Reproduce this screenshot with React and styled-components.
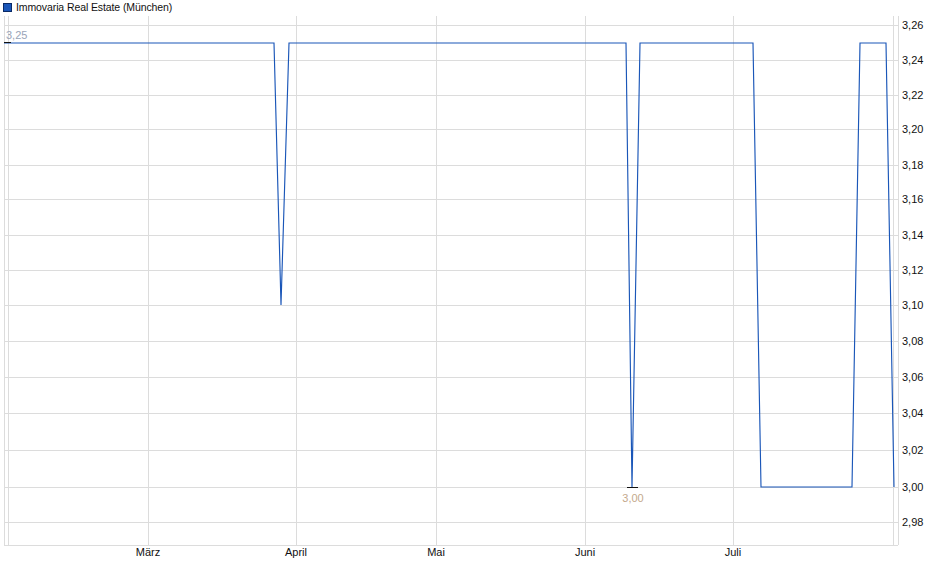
import React from "react";
import styled, { createGlobalStyle } from "styled-components";

const Global = createGlobalStyle`
  html, body { margin: 0; background: #fff; }
  body { font-family: "Liberation Sans", Arial, sans-serif; }
`;

const Page = styled.div`
  width: 940px;
  height: 579px;
  display: flex;
  flex-direction: column;
`;

const Legend = styled.div`
  display: flex;
  align-items: center;
  gap: 4px;
  padding: 0 0 0 3px;
  height: 14px;
  font-size: 10.5px;
  letter-spacing: -0.1px;
  color: #111;
`;

const Swatch = styled.span`
  width: 7px;
  height: 7px;
  background: #1a56b8;
  border: 1px solid #0a2a66;
`;

const ChartSvg = styled.svg`
  display: block;
  font-family: "Liberation Sans", Arial, sans-serif;
`;

const yTicks = [
  ["3,26", 25], ["3,24", 60], ["3,22", 95], ["3,20", 129], ["3,18", 165],
  ["3,16", 199], ["3,14", 235], ["3,12", 270], ["3,10", 305], ["3,08", 341],
  ["3,06", 377], ["3,04", 413], ["3,02", 450], ["3,00", 487], ["2,98", 522],
];
const xTicks = [["März", 148], ["April", 296], ["Mai", 436], ["Juni", 585], ["Juli", 733]];
const OFF = 14;

const pts = [
  [4, 43], [274, 43], [281, 305], [289, 43], [626, 43], [632, 487], [640, 43],
  [753, 43], [761, 487], [852, 487], [860, 43], [886, 43], [894, 487],
];

function Chart() {
  const d = pts.map(([x, y], i) => `${i ? "L" : "M"}${x} ${y - OFF}`).join(" ");
  return (
    <ChartSvg width="940" height="565" viewBox="0 0 940 565">
      {yTicks.map(([t, y]) => (
        <g key={t}>
          <line x1="4" x2="898" y1={y - OFF + 0.5} y2={y - OFF + 0.5} stroke="#dcdcdc" />
          <text x="902" y={y - OFF + 4} fontSize="11" fill="#111">{t}</text>
        </g>
      ))}
      {[8, ...xTicks.map((t) => t[1]), 893].map((x) => (
        <line key={x} x1={x + 0.5} x2={x + 0.5} y1="2" y2={545 - OFF} stroke="#dcdcdc" />
      ))}
      <line x1="4.5" x2="4.5" y1="2" y2={545 - OFF} stroke="#dcdcdc" />
      <line x1="898.5" x2="898.5" y1="2" y2={545 - OFF} stroke="#dcdcdc" />
      <line x1="4" x2="898" y1={545 - OFF + 0.5} y2={545 - OFF + 0.5} stroke="#dcdcdc" />
      {xTicks.map(([t, x]) => (
        <text key={t} x={x} y={556 - OFF} fontSize="11" fill="#111" textAnchor="middle">{t}</text>
      ))}
      <path d={d} fill="none" stroke="#1a56b8" strokeWidth="1.15" />
      <line x1="4" x2="11" y1={42.5 - OFF} y2={42.5 - OFF} stroke="#111" />
      <text x="6" y={39 - OFF} fontSize="11" fill="#99a4b8">3,25</text>
      <line x1="627" x2="638" y1={487.5 - OFF} y2={487.5 - OFF} stroke="#111" />
      <text x="633" y={502 - OFF} fontSize="11" fill="#c4a98c" textAnchor="middle">3,00</text>
    </ChartSvg>
  );
}

export default function App() {
  return (
    <Page>
      <Global />
      <Legend><Swatch />Immovaria Real Estate (München)</Legend>
      <Chart />
    </Page>
  );
}
